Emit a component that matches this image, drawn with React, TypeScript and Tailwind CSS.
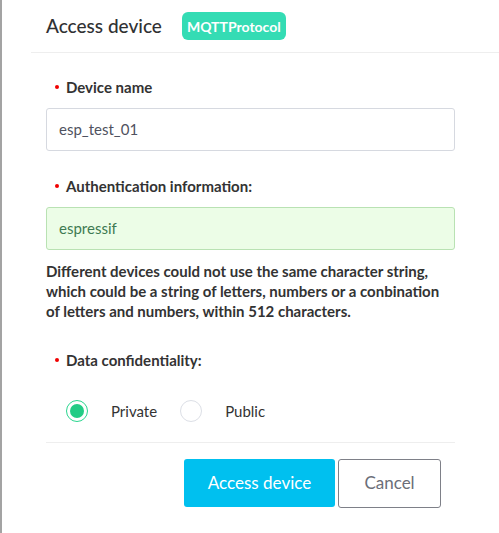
import { useState } from "react";

const Label = ({ text }: { text: string }) => (
    <div className="flex items-center h-5 pl-[9px]">
        <span className="w-[4px] h-[4px] rounded-full bg-[#f00000] mr-[7px]" />
        <span className="text-[15px] font-bold text-[#333333]">{text}</span>
    </div>
);

const Radio = ({ checked, label, onClick }: { checked: boolean; label: string; onClick: () => void }) => (
    <label className="flex items-center cursor-pointer" onClick={onClick}>
        <span
            className={
                checked
                    ? "w-[22px] h-[22px] rounded-full border border-[#2bd68f] flex items-center justify-center"
                    : "w-[22px] h-[22px] rounded-full border border-[#dcdfe6] flex items-center justify-center"
            }
        >
            {checked && <span className="w-[14px] h-[14px] rounded-full bg-[#22cc85]" />}
        </span>
        <span className="ml-[23px] text-[15px] text-[#333333]">{label}</span>
    </label>
);

export default function App() {
    const [privacy, setPrivacy] = useState<"private" | "public">("private");

    return (
        <div className="w-[499px] h-[533px] bg-white border-l-2 border-[#a3a3a3] overflow-hidden font-['Lato','Liberation_Sans',sans-serif]">
            <div className="flex items-center h-[53px] ml-[29px] pl-[15px] border-b border-[#eeeeee]">
                <h2 className="text-[19px] font-medium text-[#303133]">Access device</h2>
                <span className="ml-[20px] h-[28px] px-[5px] flex items-center rounded-[6px] bg-[#34dcb4] text-white text-[14px] font-bold">
                    MQTTProtocol
                </span>
            </div>

            <div className="pl-[44px] pr-[44px]">
                <div className="pt-[24px]">
                    <Label text="Device name" />
                </div>
                <div className="mt-[11px] h-[43px] border border-[#d6d9e0] rounded-[3px] flex items-center px-[12px] text-[15px] text-[#4f5260]">
                    esp_test_01
                </div>

                <div className="mt-[25px]">
                    <Label text="Authentication information:" />
                </div>
                <div className="mt-[11px] h-[43px] border border-[#b9e2b3] bg-[#ecfde7] rounded-[3px] flex items-center px-[12px] text-[15px] text-[#3e7a52]">
                    espressif
                </div>

                <p className="mt-[11px] text-[15px] leading-[20px] font-bold text-[#333333] whitespace-nowrap">
                    Different devices could not use the same character string,
                    <br />
                    which could be a string of letters, numbers or a conbination
                    <br />
                    of letters and numbers, within 512 characters.
                </p>

                <div className="mt-[29px]">
                    <Label text="Data confidentiality:" />
                </div>

                <div className="mt-[30px] flex items-center gap-[23px] pl-[20px]">
                    <Radio checked={privacy === "private"} label="Private" onClick={() => setPrivacy("private")} />
                    <Radio checked={privacy === "public"} label="Public" onClick={() => setPrivacy("public")} />
                </div>

                <div className="mt-[19px] border-t border-[#eeeeee]" />

                <div className="mt-[16px] flex justify-end items-center pr-[14px]">
                    <button className="w-[151px] h-[48px] rounded-[3px] bg-[#00c0ef] text-white text-[17px]">
                        Access device
                    </button>
                    <button className="ml-[3px] w-[103px] h-[49px] rounded-[3px] border border-[#7e8088] bg-white text-[#6b6e78] text-[17px]">
                        Cancel
                    </button>
                </div>
            </div>
        </div>
    );
}
